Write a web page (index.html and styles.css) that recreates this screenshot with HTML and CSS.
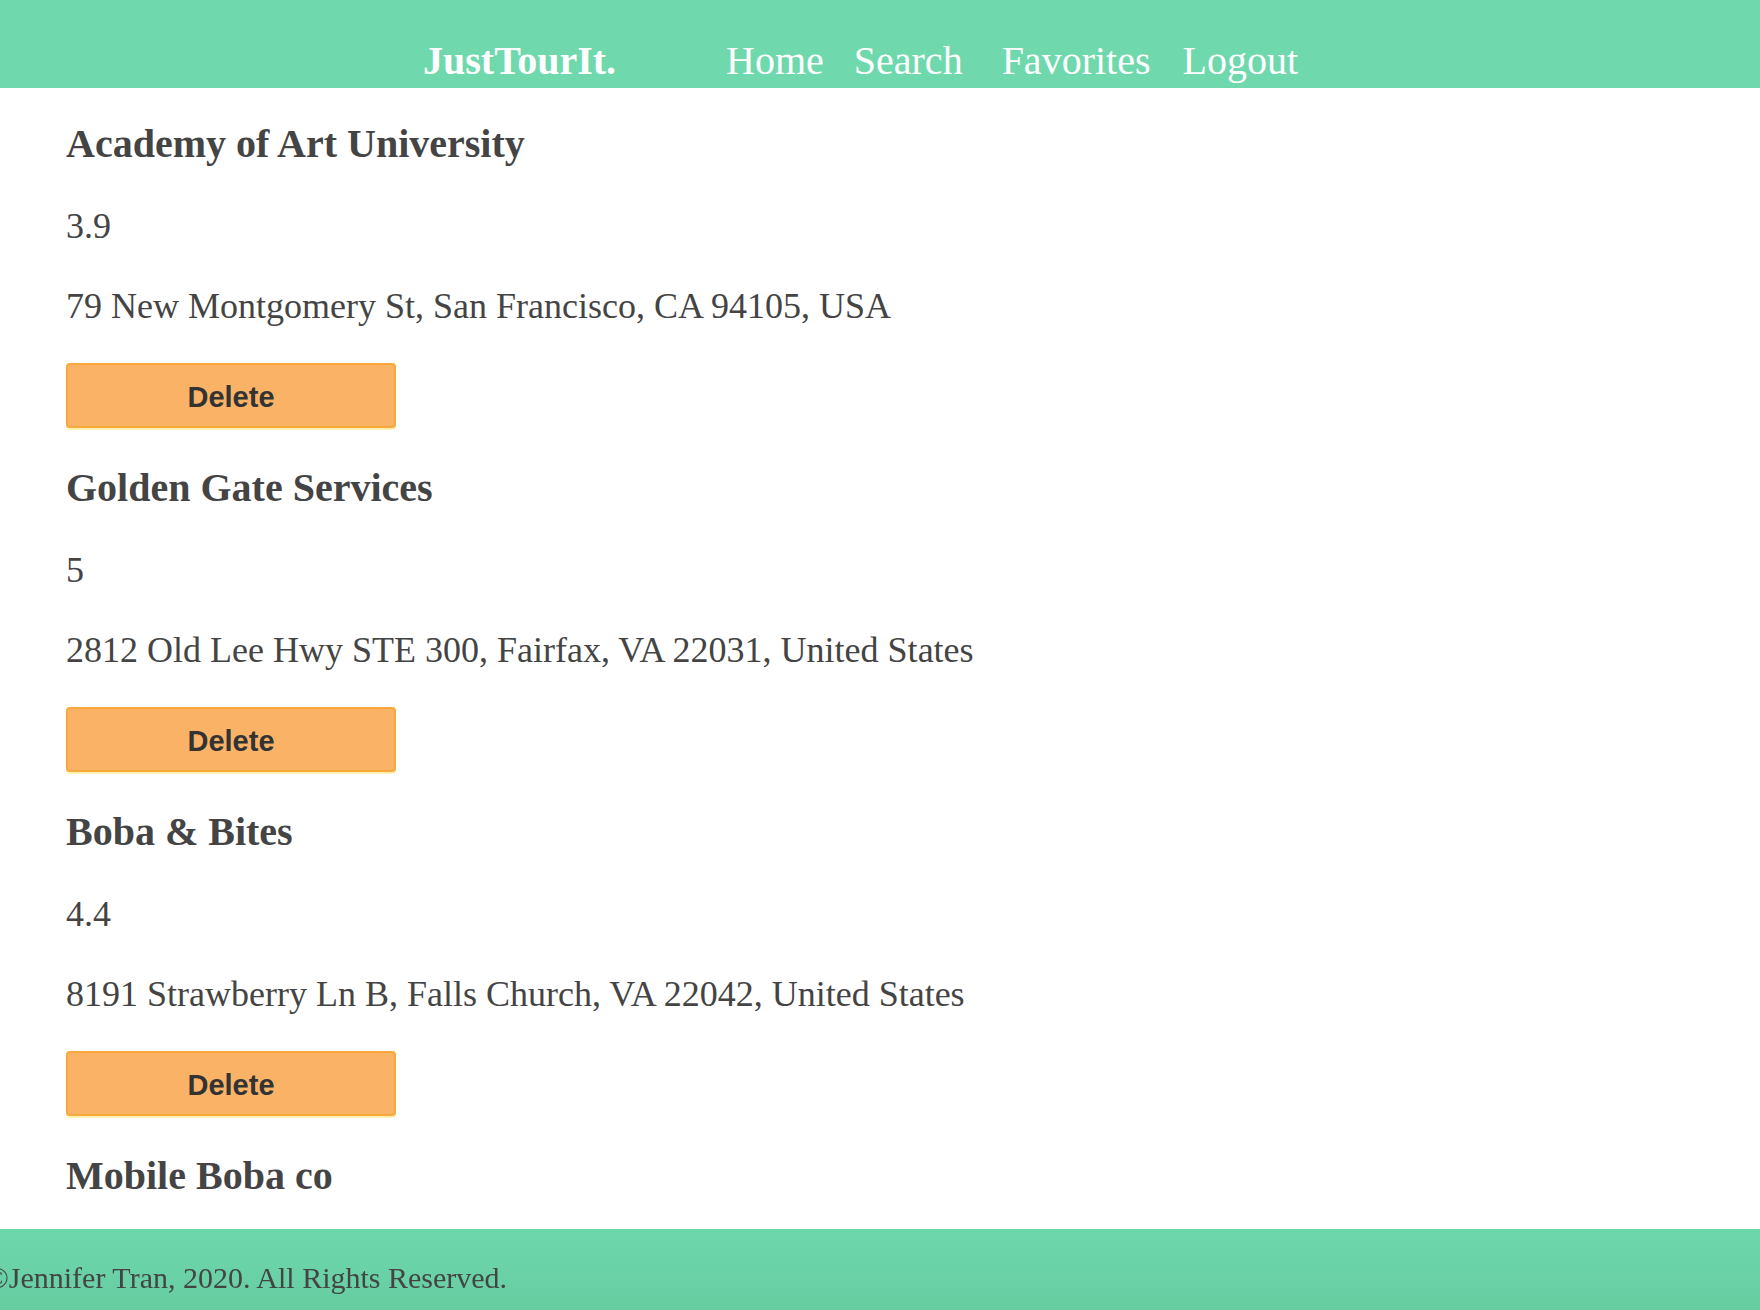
FILE: index.html
```html
<!DOCTYPE html>
<html lang="en">
<head>
<meta charset="utf-8">
<title>JustTourIt. - Favorites</title>
<link rel="stylesheet" href="styles.css">
</head>
<body>
<header class="topbar">
  <a class="brand" href="#">JustTourIt.</a>
  <nav class="nav">
    <a class="nav-link nav-home" href="#">Home</a>
    <a class="nav-link nav-search" href="#">Search</a>
    <a class="nav-link nav-fav" href="#">Favorites</a>
    <a class="nav-link nav-logout" href="#">Logout</a>
  </nav>
</header>
<main class="favorites">
  <section class="place">
    <h2 class="place-name">Academy of Art University</h2>
    <p class="place-text">3.9</p>
    <p class="place-text">79 New Montgomery St, San Francisco, CA 94105, USA</p>
    <button class="delete-btn" type="button">Delete</button>
  </section>
  <section class="place">
    <h2 class="place-name">Golden Gate Services</h2>
    <p class="place-text">5</p>
    <p class="place-text">2812 Old Lee Hwy STE 300, Fairfax, VA 22031, United States</p>
    <button class="delete-btn" type="button">Delete</button>
  </section>
  <section class="place">
    <h2 class="place-name">Boba &amp; Bites</h2>
    <p class="place-text">4.4</p>
    <p class="place-text">8191 Strawberry Ln B, Falls Church, VA 22042, United States</p>
    <button class="delete-btn" type="button">Delete</button>
  </section>
  <section class="place">
    <h2 class="place-name">Mobile Boba co</h2>
  </section>
</main>
<footer class="site-footer">
  <p class="copyright">©Jennifer Tran, 2020. All Rights Reserved.</p>
</footer>
</body>
</html>
```
FILE: styles.css
```css
* { box-sizing: border-box; }

html, body {
  margin: 0;
  padding: 0;
}

body {
  font-family: "Liberation Serif", "Times New Roman", serif;
  color: #444444;
  background: #ffffff;
}

.topbar {
  display: flex;
  align-items: baseline;
  height: 88px;
  padding: 37px 0 0 423px;
  background: #6fd8ad;
}

.brand {
  font-size: 40px;
  line-height: 48px;
  font-weight: bold;
  color: #ffffff;
  text-decoration: none;
}

.nav {
  display: flex;
  align-items: baseline;
}

.nav-link {
  font-size: 40px;
  line-height: 48px;
  color: #ffffff;
  text-decoration: none;
}

.nav-home { margin-left: 110px; }
.nav-search { margin-left: 30px; }
.nav-fav { margin-left: 39px; }
.nav-logout { margin-left: 32px; }

.favorites {
  padding: 32px 0 0 66px;
}

.place + .place {
  margin-top: 36px;
}

.place-name {
  margin: 0;
  font-size: 40px;
  line-height: 48px;
  font-weight: bold;
  color: #444444;
}

.place-text {
  margin: 36px 0 0;
  font-size: 36px;
  line-height: 44px;
  color: #444444;
}

.delete-btn {
  display: flex;
  align-items: center;
  justify-content: center;
  margin-top: 35px;
  width: 330px;
  height: 65px;
  padding: 3px 0 0;
  background: #fab366;
  border: 2px solid #f9a83a;
  border-radius: 4px;
  box-shadow: 0 2px 0 #fff0b5;
  font-family: "Liberation Sans", Arial, sans-serif;
  font-size: 29px;
  font-weight: bold;
  color: #333333;
  cursor: pointer;
}

.site-footer {
  position: fixed;
  left: 0;
  right: 0;
  bottom: 0;
  height: 81px;
  padding-top: 31px;
  background: linear-gradient(#6ed7ac, #66cda1);
}

.copyright {
  margin: 0 0 0 -14px;
  font-size: 30px;
  line-height: 36px;
  color: #444444;
  white-space: nowrap;
}
```
